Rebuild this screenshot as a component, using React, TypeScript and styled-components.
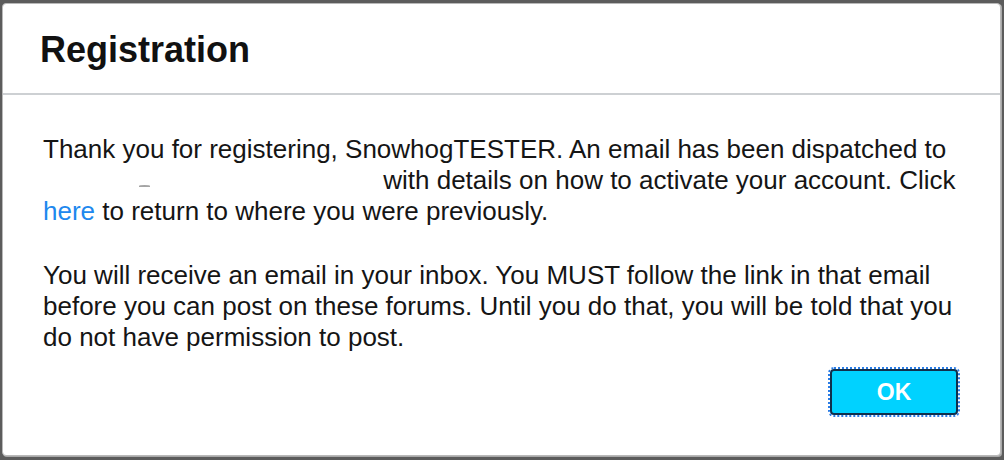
import styled, { createGlobalStyle } from 'styled-components'

const GlobalStyle = createGlobalStyle`
  html, body {
    margin: 0;
    padding: 0;
    height: 100%;
    overflow: hidden;
    background: #5c5c5c;
  }
  #root {
    height: 100%;
  }
`

const Backdrop = styled.div`
  height: 100%;
  box-sizing: border-box;
  padding: 3px 3px 4px 2px;
  display: flex;
  font-family: "Liberation Sans", Arial, Helvetica, sans-serif;
`

const Dialog = styled.section`
  flex: 1;
  display: flex;
  flex-direction: column;
  background: #fff;
  border: 1px solid #b9b9b9;
  border-radius: 4px;
  box-shadow: 1px 1px 0 #a9a9a9;
`

const Header = styled.header`
  padding: 25px 37px 23px;
  border-bottom: 2px solid #cdd0d3;
  > h2 {
    margin: 0;
    font-size: 36px;
    line-height: 41px;
    font-weight: 700;
    color: #111;
  }
`

const Body = styled.div`
  flex: 1;
  display: flex;
  flex-direction: column;
  padding: 39px 40px 41px;
  color: #151515;
  font-size: 26px;
  line-height: 31px;
`

const Paragraph = styled.p`
  margin: 0 0 33px;
  &:last-of-type {
    margin-bottom: 0;
  }
`

const Redacted = styled.span`
  display: inline-block;
  position: relative;
  width: 333px;
  height: 1px;
  &::after {
    content: "";
    position: absolute;
    left: 96px;
    top: -3px;
    width: 11px;
    height: 2px;
    border-radius: 50% 50% 0 0;
    background: #a4a4a4;
  }
`

const Link = styled.a`
  color: #2088ee;
  text-decoration: none;
  cursor: pointer;
`

const Footer = styled.div`
  display: flex;
  justify-content: flex-end;
  margin-top: 16px;
  padding-right: 2px;
`

const OkButton = styled.button`
  width: 128px;
  height: 46px;
  box-sizing: border-box;
  background: #00d2ff;
  border: 2px solid #10304c;
  border-radius: 4px;
  outline: 2px dotted #2b7de6;
  outline-offset: 0;
  color: #fff;
  font-family: "Liberation Sans", Arial, sans-serif;
  font-size: 23px;
  font-weight: 700;
  cursor: pointer;
`

export default function App() {
  return (
    <>
      <GlobalStyle />
      <Backdrop>
        <Dialog>
          <Header>
            <h2>Registration</h2>
          </Header>
          <Body>
            <Paragraph>
              Thank you for registering, SnowhogTESTER. An email has been dispatched to{' '}
              <Redacted /> with details on how to activate your account. Click{' '}
              <Link>here</Link> to return to where you were previously.
            </Paragraph>
            <Paragraph>
              You will receive an email in your inbox. You MUST follow the link in that email before
              you can post on these forums. Until you do that, you will be told that you do not have
              permission to post.
            </Paragraph>
            <Footer>
              <OkButton>OK</OkButton>
            </Footer>
          </Body>
        </Dialog>
      </Backdrop>
    </>
  )
}
